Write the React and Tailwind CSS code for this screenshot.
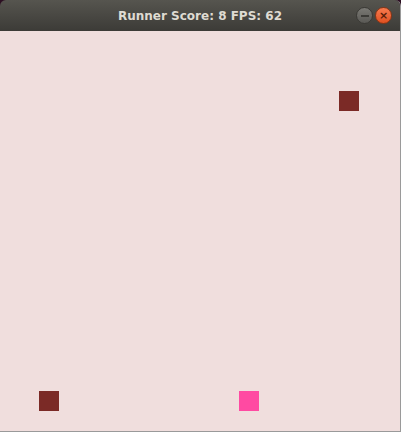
import React from "react";

const blocks = [
  { x: 339, y: 60, color: "bg-[#7b2a26]" },
  { x: 39, y: 360, color: "bg-[#7b2a26]" },
  { x: 239, y: 360, color: "bg-[#ff4aa2]" },
];

const App = () => {
  return (
    <div className="w-[401px] h-[432px] bg-[#2c0f22] overflow-hidden">
      <div className="w-[401px] h-[432px] flex flex-col rounded-t-[6px] overflow-hidden border-r border-b border-[#9a9a9a]">
        {/* Title bar */}
        <div className="relative h-[31px] shrink-0 flex items-center justify-center bg-gradient-to-b from-[#56554f] to-[#3c3b37]">
          <span className="text-[12px] font-bold text-[#dfdbd2] [font-family:'DejaVu_Sans',sans-serif]">
            Runner Score: 8 FPS: 62
          </span>
          <div className="absolute right-[8px] top-[7px] flex gap-[2px]">
            <div className="w-[17px] h-[17px] rounded-full bg-gradient-to-b from-[#7a7974] to-[#5a5955] border border-[#3a3935] flex items-center justify-center">
              <div className="w-[8px] h-[2px] bg-[#3c3b37]" />
            </div>
            <div className="w-[17px] h-[17px] rounded-full bg-gradient-to-b from-[#f77a4e] to-[#e0501f] border border-[#8a3414] flex items-center justify-center text-[#5a1d08] text-[11px] font-bold leading-none [font-family:'DejaVu_Sans',sans-serif]">
              ×
            </div>
          </div>
        </div>
        {/* Game canvas */}
        <div className="relative flex-1 bg-[#f0dedd]">
          {blocks.map((b, i) => (
            <div
              key={i}
              className={`absolute w-[20px] h-[20px] ${b.color}`}
              style={{ left: b.x, top: b.y }}
            />
          ))}
        </div>
      </div>
    </div>
  );
};

export default App;
